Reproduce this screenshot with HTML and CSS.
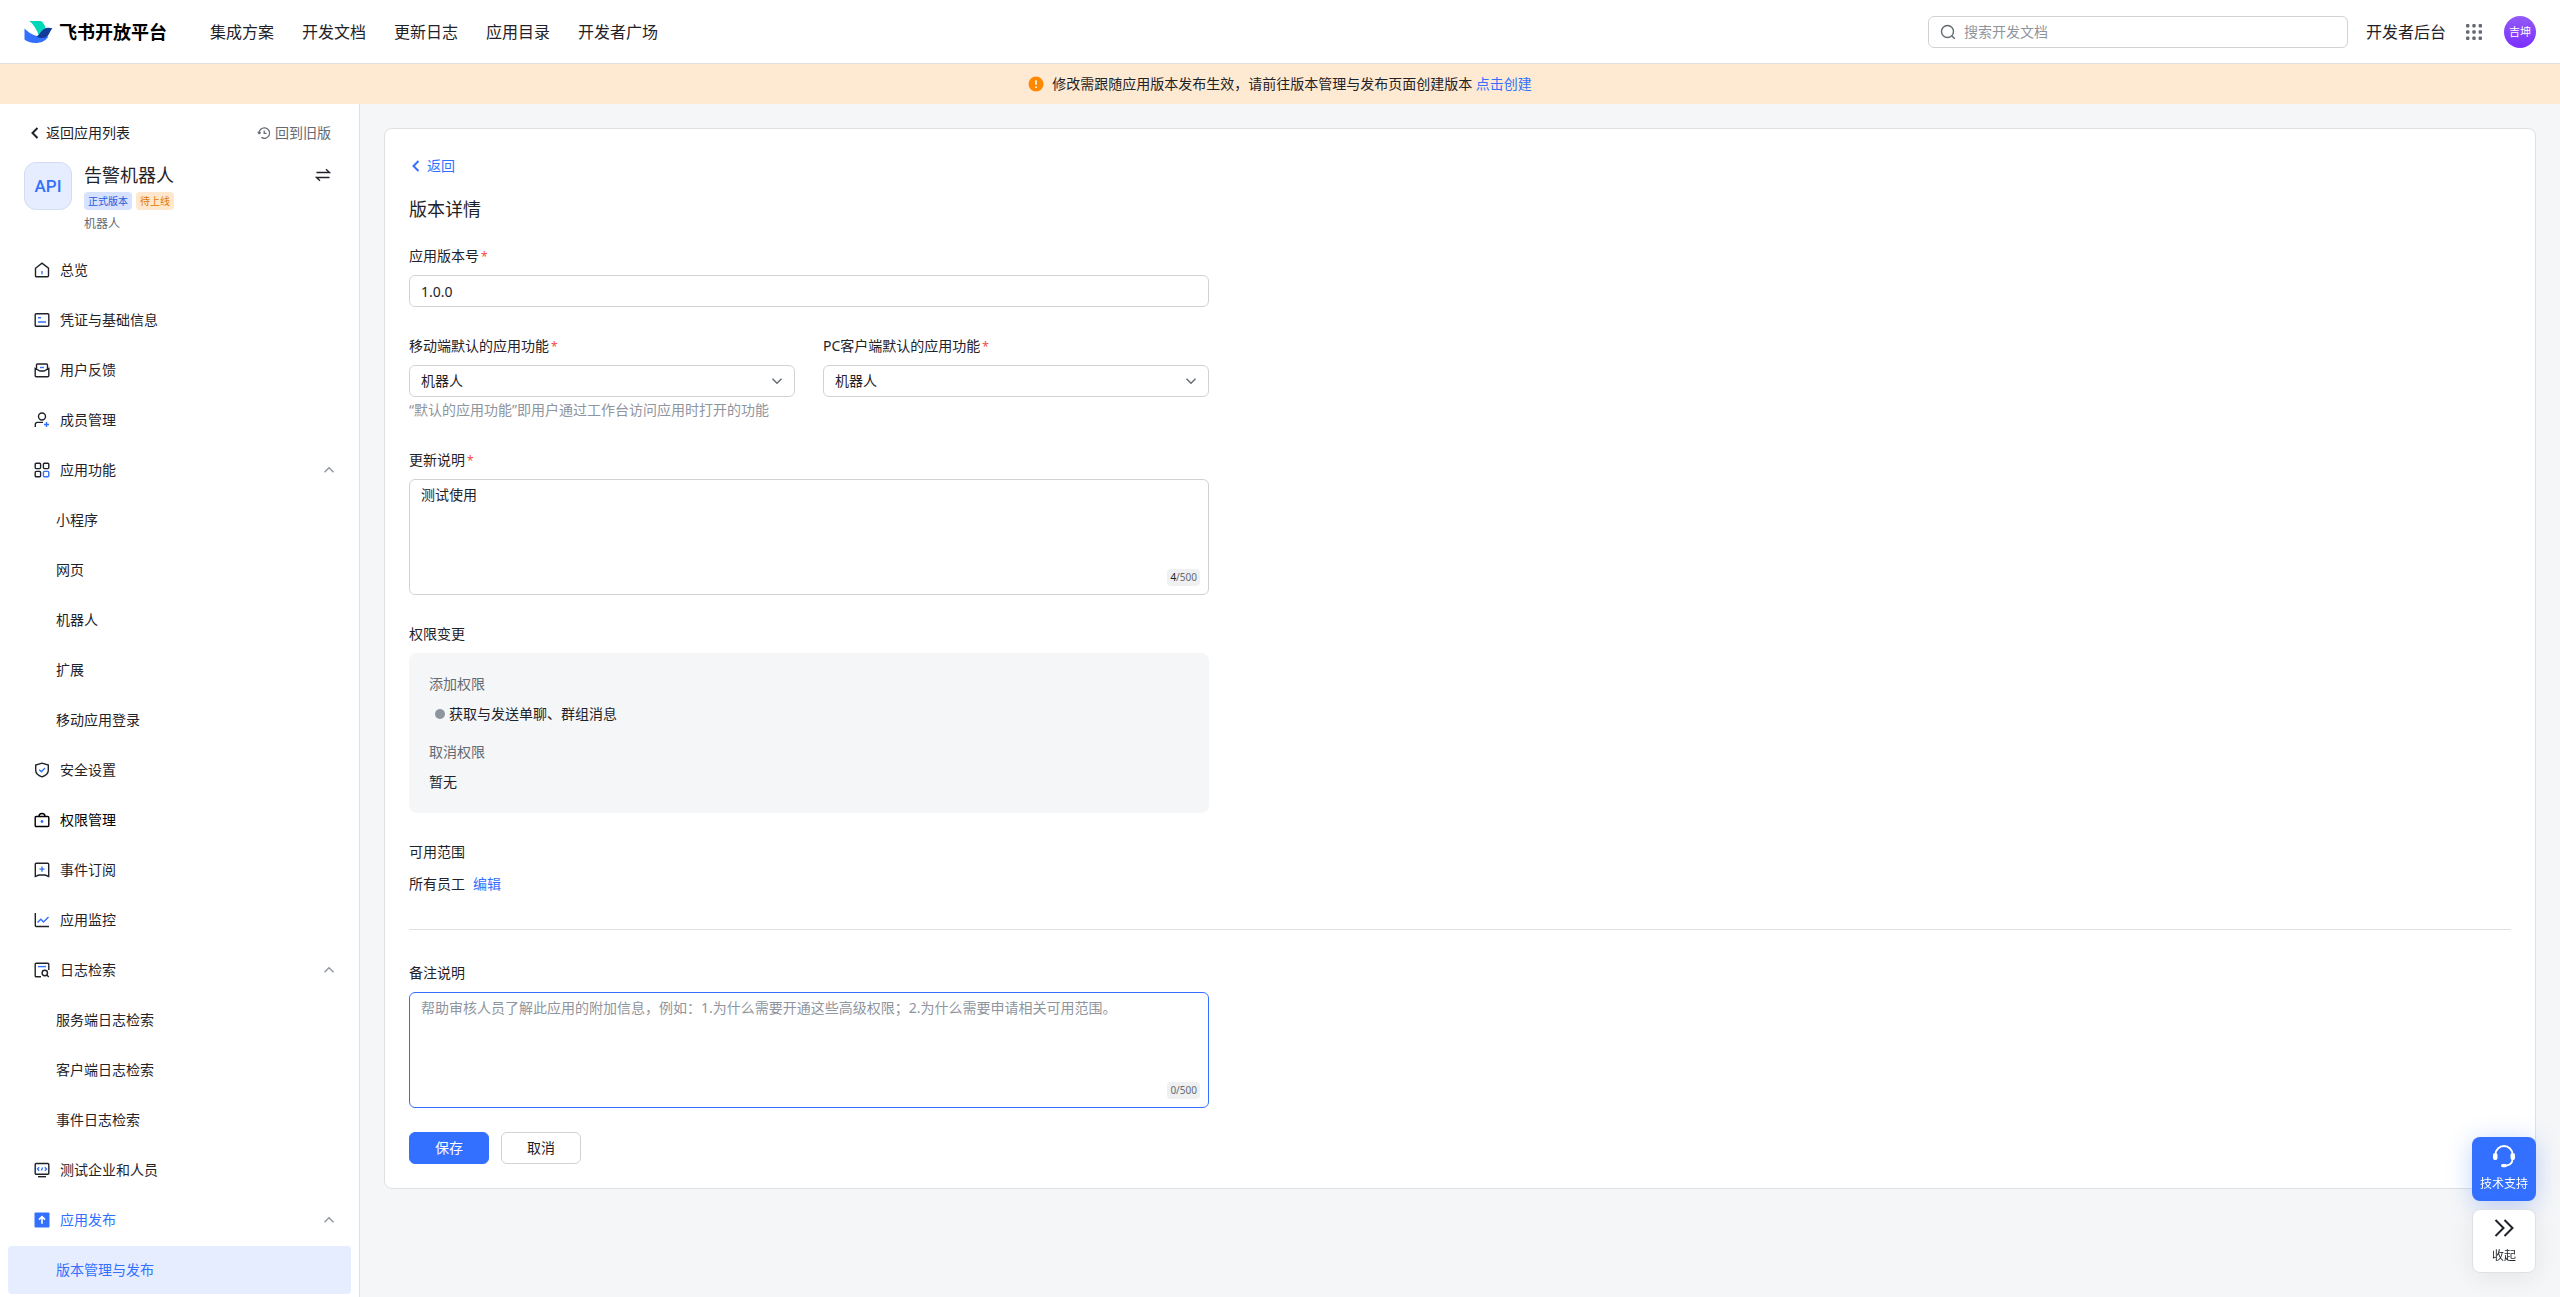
FILE: index.html
```html
<!DOCTYPE html>
<html lang="zh-CN">
<head>
<meta charset="utf-8">
<meta name="viewport" content="width=device-width, initial-scale=1">
<title>版本详情 - 飞书开放平台</title>
<link rel="stylesheet" href="styles.css">
</head>
<body>
<header class="topbar">
  <a class="brand" href="#">
    <svg class="brand-mark" viewBox="0 0 28 22" aria-hidden="true">
      <path fill="#00d6b9" d="M5 0h11c2 0 5 5 5.500 8.500L14.500 14.500C12 8 9 3.500 5 0z"/>
      <path fill="#3370ff" d="M0 7.500C4 11.500 9 15 15 15.500h9C21 20 16.500 22 11 22 6 22 2.500 20.500.5 19 .1 18.500 0 18.500 0 18z"/>
      <path fill="#133c9a" d="M12 15.800C15 13.500 17 9.500 19.500 8 22 6.500 26 6.600 28 7.600 26 9 25 13 23 15.300 20.500 17.500 15.500 17.500 12 15.800z"/>
    </svg>
    <span>飞书开放平台</span>
  </a>
  <nav class="topnav" aria-label="主导航">
    <a href="#">集成方案</a>
    <a href="#">开发文档</a>
    <a href="#">更新日志</a>
    <a href="#">应用目录</a>
    <a href="#">开发者广场</a>
  </nav>
  <div class="topbar-tools">
    <label class="search">
      <svg class="icon" viewBox="0 0 16 16" aria-hidden="true"><circle cx="7.500" cy="7.500" r="6"/><path d="M12 12l2.800 2.800"/></svg>
      <input type="search" placeholder="搜索开发文档" aria-label="搜索开发文档">
    </label>
    <a class="console-link" href="#">开发者后台</a>
    <button class="grid-button" type="button" aria-label="更多产品">
      <svg viewBox="0 0 18 18" aria-hidden="true">
        <rect x="1" y="1" width="3.400" height="3.400" rx="1"/><rect x="7.300" y="1" width="3.400" height="3.400" rx="1"/><rect x="13.600" y="1" width="3.400" height="3.400" rx="1"/>
        <rect x="1" y="7.300" width="3.400" height="3.400" rx="1"/><rect x="7.300" y="7.300" width="3.400" height="3.400" rx="1"/><rect x="13.600" y="7.300" width="3.400" height="3.400" rx="1"/>
        <rect x="1" y="13.600" width="3.400" height="3.400" rx="1"/><rect x="7.300" y="13.600" width="3.400" height="3.400" rx="1"/><rect x="13.600" y="13.600" width="3.400" height="3.400" rx="1"/>
      </svg>
    </button>
    <button class="avatar" type="button">吉坤</button>
  </div>
</header>

<div class="notice" role="status">
  <svg class="notice-icon" viewBox="0 0 16 16" aria-hidden="true"><circle cx="8" cy="8" r="7.500" fill="#ff8800"/><path d="M8 4.300v4.400M8 10.400v1.600" stroke="#fff" stroke-width="1.600"/></svg>
  <span>修改需跟随应用版本发布生效，请前往版本管理与发布页面创建版本 <a href="#">点击创建</a></span>
</div>

<div class="workspace">
  <aside class="sidebar">
    <div class="sidebar-links">
      <a class="back-link" href="#">
        <svg class="icon" viewBox="0 0 12 16" aria-hidden="true"><path d="M8.500 3L3.500 8l5 5"/></svg>返回应用列表
      </a>
      <a class="legacy-link" href="#">
        <svg class="icon" viewBox="0 0 16 16" aria-hidden="true"><path d="M2.400 8.500A6 6 0 1 1 5 13M1 6.800l1.400 2 2-1.400M8.200 5v3.500h2.600"/></svg>回到旧版
      </a>
    </div>

    <div class="app-card">
      <div class="app-logo">API</div>
      <div class="app-info">
        <div class="app-name">告警机器人</div>
        <div class="tags"><span class="tag tag-blue">正式版本</span><span class="tag tag-orange">待上线</span></div>
        <div class="app-type">机器人</div>
      </div>
      <button class="switch-button" type="button" aria-label="切换应用">
        <svg class="icon" viewBox="0 0 16 16" aria-hidden="true"><path d="M1.500 5.500h13L11 2.200M14.500 10.500h-13L5 13.800"/></svg>
      </button>
    </div>

    <nav class="menu" aria-label="应用导航">
      <a class="menu-item" href="#"><svg class="icon" viewBox="0 0 16 16" aria-hidden="true"><path d="M1.500 6.200L8 1.200l6.500 5v7.600a1 1 0 0 1-1 1h-11a1 1 0 0 1-1-1z"/><path class="accent" d="M8 9v3.200"/></svg>总览</a>
      <a class="menu-item" href="#"><svg class="icon" viewBox="0 0 16 16" aria-hidden="true"><rect x="1.200" y="1.700" width="13.600" height="12.600" rx="1"/><path class="accent" d="M4 5.700h3M4 10h8"/></svg>凭证与基础信息</a>
      <a class="menu-item" href="#"><svg class="icon" viewBox="0 0 16 16" aria-hidden="true"><path d="M1.200 6.500v7.200a1 1 0 0 0 1 1h11.600a1 1 0 0 0 1-1V6.500L10 9H6zM2.500 6.500V3a1 1 0 0 1 1-1h9a1 1 0 0 1 1 1v3.500"/><path class="accent" d="M6 5.500h4"/></svg>用户反馈</a>
      <a class="menu-item" href="#"><svg class="icon" viewBox="0 0 16 16" aria-hidden="true"><circle cx="8" cy="4.500" r="3.500"/><path d="M1.300 15v-2.600a2 2 0 0 1 2-2H9"/><path class="accent" d="M12.500 10v5M10 12.500h5"/></svg>成员管理</a>
      <a class="menu-item" href="#" aria-expanded="true"><svg class="icon" viewBox="0 0 16 16" aria-hidden="true"><rect x="1.200" y="1.200" width="5.400" height="5.400" rx="1"/><rect x="9.400" y="1.200" width="5.400" height="5.400" rx="1"/><rect x="1.200" y="9.400" width="5.400" height="5.400" rx="1"/><rect class="accent" x="9.400" y="9.400" width="5.400" height="5.400" rx="1"/></svg>应用功能<svg class="icon fold" viewBox="0 0 12 12" aria-hidden="true"><path d="M1.500 8.200L6 3.800l4.500 4.400"/></svg></a>
      <a class="menu-item sub" href="#">小程序</a>
      <a class="menu-item sub" href="#">网页</a>
      <a class="menu-item sub" href="#">机器人</a>
      <a class="menu-item sub" href="#">扩展</a>
      <a class="menu-item sub" href="#">移动应用登录</a>
      <a class="menu-item" href="#"><svg class="icon" viewBox="0 0 16 16" aria-hidden="true"><path d="M8 1.200l6.300 1.900v5.200c0 3-2.600 5.300-6.300 6.600-3.700-1.300-6.300-3.600-6.300-6.600V3.100z"/><path class="accent" d="M5.200 7.800l2.200 2L11 6"/></svg>安全设置</a>
      <a class="menu-item strong" href="#"><svg class="icon" viewBox="0 0 16 16" aria-hidden="true"><rect x="1.200" y="4.500" width="13.600" height="10" rx="1"/><path d="M5 4.500C5 2.500 6 1.500 8 1.500s3 1 3 3"/><circle class="accent-fill" cx="8" cy="9.500" r="1.400"/></svg>权限管理</a>
      <a class="menu-item" href="#"><svg class="icon" viewBox="0 0 16 16" aria-hidden="true"><path d="M1.300 14.500V2.300a1 1 0 0 1 1-1h11.400a1 1 0 0 1 1 1v12.200L11 13H5z"/><path class="accent" d="M8 4.500v5.200M5.400 7.100h5.200"/></svg>事件订阅</a>
      <a class="menu-item" href="#"><svg class="icon" viewBox="0 0 16 16" aria-hidden="true"><path d="M1.300 1v12.500a1 1 0 0 0 1 1H15"/><path class="accent" d="M3.500 10.500l3.300-3.300 2.700 2.900 5-5"/></svg>应用监控</a>
      <a class="menu-item" href="#" aria-expanded="true"><svg class="icon" viewBox="0 0 16 16" aria-hidden="true"><path d="M7 14.700H2.200a1 1 0 0 1-1-1V2.300a1 1 0 0 1 1-1h11.600a1 1 0 0 1 1 1V8"/><circle cx="10.800" cy="11" r="2.700"/><path d="M12.800 13l2 2"/><path class="accent" d="M4 4.600h8"/></svg>日志检索<svg class="icon fold" viewBox="0 0 12 12" aria-hidden="true"><path d="M1.500 8.200L6 3.800l4.500 4.400"/></svg></a>
      <a class="menu-item sub" href="#">服务端日志检索</a>
      <a class="menu-item sub" href="#">客户端日志检索</a>
      <a class="menu-item sub" href="#">事件日志检索</a>
      <a class="menu-item" href="#"><svg class="icon" viewBox="0 0 16 16" aria-hidden="true"><rect x="1.200" y="1.500" width="13.600" height="10.800" rx="1"/><path d="M4 14.700h8"/><path class="accent" d="M5.200 5.300L3.500 7l1.700 1.700M10.800 5.300L12.500 7l-1.700 1.700M8.600 5.500l-1.200 3"/></svg>测试企业和人员</a>
      <a class="menu-item current-group" href="#" aria-expanded="true"><svg class="icon" viewBox="0 0 16 16" aria-hidden="true"><rect x="0.500" y="0.500" width="15" height="15" rx="1" fill="#3370ff" stroke="none"/><path d="M8 11.800V5M5 7.600l3-3 3 3" stroke="#fff" stroke-width="1.600"/></svg>应用发布<svg class="icon fold" viewBox="0 0 12 12" aria-hidden="true"><path d="M1.500 8.200L6 3.800l4.500 4.400"/></svg></a>
      <a class="menu-item sub active" href="#" aria-current="page">版本管理与发布</a>
    </nav>
  </aside>

  <main class="content">
    <form class="panel">
      <a class="panel-back" href="#"><svg class="icon" viewBox="0 0 12 16" aria-hidden="true"><path d="M8.500 3L3.500 8l5 5"/></svg>返回</a>
      <h1>版本详情</h1>

      <div class="field">
        <label for="version">应用版本号<span class="required">*</span></label>
        <input class="control" id="version" type="text" value="1.0.0">
      </div>

      <div class="field-row">
        <div class="field">
          <label for="mobile">移动端默认的应用功能<span class="required">*</span></label>
          <div class="select-wrap">
            <select class="control" id="mobile"><option>机器人</option></select>
            <svg class="icon caret" viewBox="0 0 12 12" aria-hidden="true"><path d="M1.500 3.800L6 8.200l4.500-4.400"/></svg>
          </div>
          <p class="hint">“默认的应用功能”即用户通过工作台访问应用时打开的功能</p>
        </div>
        <div class="field">
          <label for="desktop">PC客户端默认的应用功能<span class="required">*</span></label>
          <div class="select-wrap">
            <select class="control" id="desktop"><option>机器人</option></select>
            <svg class="icon caret" viewBox="0 0 12 12" aria-hidden="true"><path d="M1.500 3.800L6 8.200l4.500-4.400"/></svg>
          </div>
        </div>
      </div>

      <div class="field">
        <label for="changes">更新说明<span class="required">*</span></label>
        <div class="textarea-wrap">
          <textarea class="control" id="changes">测试使用</textarea>
          <span class="counter"><b>4</b>/500</span>
        </div>
      </div>

      <section class="field">
        <h2>权限变更</h2>
        <div class="permissions">
          <h3>添加权限</h3>
          <ul><li>获取与发送单聊、群组消息</li></ul>
          <h3>取消权限</h3>
          <p>暂无</p>
        </div>
      </section>

      <section class="field">
        <h2>可用范围</h2>
        <p class="scope">所有员工<a href="#">编辑</a></p>
      </section>

      <hr>

      <div class="field remark">
        <label for="remark">备注说明</label>
        <div class="textarea-wrap">
          <textarea class="control focused" id="remark" placeholder="帮助审核人员了解此应用的附加信息，例如：1.为什么需要开通这些高级权限；2.为什么需要申请相关可用范围。"></textarea>
          <span class="counter">0/500</span>
        </div>
      </div>

      <div class="actions">
        <button class="button primary" type="submit">保存</button>
        <button class="button" type="button">取消</button>
      </div>
    </form>
  </main>
</div>

<div class="floating">
  <button class="float-button support" type="button">
    <svg viewBox="0 0 24 24" aria-hidden="true"><path d="M3.500 14V10.500a8.500 8.500 0 0 1 17 0V15c0 3.500-2.500 6-6 6.500" fill="none" stroke="currentColor" stroke-width="1.800"/><rect x="1" y="9" width="4.500" height="7" rx="2" fill="currentColor"/><rect x="18.500" y="9" width="4.500" height="7" rx="2" fill="currentColor"/><rect x="9" y="20" width="6" height="3.200" rx="1.600" fill="currentColor"/></svg>
    技术支持
  </button>
  <button class="float-button collapse" type="button">
    <svg viewBox="0 0 24 24" aria-hidden="true"><path d="M3.500 4l8 8-8 8M12.500 4l8 8-8 8" fill="none" stroke="currentColor" stroke-width="2"/></svg>
    收起
  </button>
</div>
</body>
</html>
```

FILE: styles.css
```css
:root {
  --blue: #3370ff;
  --text: #1f2329;
  --muted: #646a73;
  --faint: #8f959e;
  --line: #dee0e3;
  --control-line: #d0d3d6;
  --surface: #f5f6f7;
}

* {
  box-sizing: border-box;
}

body {
  margin: 0;
  min-height: 100vh;
  display: flex;
  flex-direction: column;
  background: var(--surface);
  color: var(--text);
  font: 14px/22px "Noto Sans", "Noto Sans CJK SC", sans-serif;
}

a {
  color: inherit;
  text-decoration: none;
}

button,
input,
select,
textarea {
  font: inherit;
  color: inherit;
}

button {
  padding: 0;
  border: 0;
  background: none;
  cursor: pointer;
}

h1,
h2,
h3,
p,
ul {
  margin: 0;
  padding: 0;
  font-size: 14px;
  font-weight: 400;
}

.icon {
  width: 16px;
  height: 16px;
  flex: none;
  fill: none;
  stroke: currentColor;
  stroke-width: 1.4;
}

.icon .accent {
  stroke: var(--blue);
}

.icon .accent-fill {
  fill: var(--blue);
  stroke: none;
}

/* Top bar */
.topbar {
  display: flex;
  align-items: center;
  height: 64px;
  padding: 0 24px;
  background: #fff;
  border-bottom: 1px solid var(--line);
}

.brand {
  display: flex;
  align-items: center;
  gap: 6px;
  color: #000;
  font-size: 18px;
  font-weight: 700;
}

.brand-mark {
  width: 29px;
  height: 22px;
}

.topnav {
  display: flex;
  gap: 28px;
  margin-left: 43px;
  font-size: 16px;
}

.topbar-tools {
  display: flex;
  align-items: center;
  margin-left: auto;
}

.search {
  display: flex;
  align-items: center;
  gap: 8px;
  width: 420px;
  height: 32px;
  padding: 0 11px;
  border: 1px solid var(--control-line);
  border-radius: 6px;
  color: var(--muted);
}

.search input {
  flex: 1;
  min-width: 0;
  padding: 0;
  border: 0;
  outline: 0;
  background: none;
  appearance: none;
}

::placeholder {
  color: var(--faint);
  opacity: 1;
}

.console-link {
  margin-left: 18px;
  font-size: 16px;
}

.grid-button {
  display: flex;
  margin-left: 19px;
  color: var(--muted);
}

.grid-button svg {
  width: 18px;
  height: 18px;
  fill: currentColor;
}

.avatar {
  width: 32px;
  height: 32px;
  margin-left: 21px;
  border-radius: 50%;
  background: linear-gradient(#935af6, #7b2fff);
  color: #fff;
  font-size: 11px;
}

/* Notice */
.notice {
  display: flex;
  align-items: center;
  justify-content: center;
  gap: 8px;
  min-height: 40px;
  background: #feead2;
}

.notice a {
  color: var(--blue);
}

.notice-icon {
  width: 16px;
  height: 16px;
}

/* Sidebar */
.workspace {
  display: flex;
  flex: 1;
}

.sidebar {
  flex: none;
  width: 360px;
  padding-top: 18px;
  background: #fff;
  border-right: 1px solid var(--line);
}

.sidebar-links {
  display: flex;
  justify-content: space-between;
  padding: 0 28px;
}

.back-link,
.legacy-link,
.panel-back {
  display: flex;
  align-items: center;
  gap: 4px;
}

.back-link .icon,
.panel-back .icon {
  width: 14px;
  stroke-width: 2;
}

.legacy-link {
  color: var(--muted);
}

.legacy-link .icon {
  width: 14px;
}

.app-card {
  display: flex;
  gap: 12px;
  margin: 18px 28px 12px 24px;
}

.app-logo {
  display: grid;
  place-items: center;
  flex: none;
  width: 48px;
  height: 48px;
  border: 1px solid #d3dcf0;
  border-radius: 12px;
  background: #e6edff;
  color: var(--blue);
  font: 500 17px "Roboto", sans-serif;
}

.app-info {
  display: grid;
  gap: 4px;
  flex: 1;
}

.app-name {
  font-size: 18px;
  line-height: 26px;
}

.tags {
  display: flex;
  gap: 4px;
}

.tag {
  padding: 0 4px;
  border-radius: 4px;
  font-size: 10px;
  line-height: 18px;
}

.tag-blue {
  background: #d6e2ff;
  color: #245bdb;
}

.tag-orange {
  background: #fee7cd;
  color: #de7802;
}

.app-type {
  color: var(--muted);
  font-size: 12px;
  line-height: 20px;
}

.switch-button {
  display: flex;
  align-self: flex-start;
  padding: 5px 0;
}

.menu {
  display: grid;
  gap: 2px;
  padding: 0 8px;
}

.menu-item {
  display: flex;
  align-items: center;
  gap: 10px;
  height: 48px;
  padding: 0 16px 0 26px;
  border-radius: 4px;
}

.menu-item.sub {
  padding-left: 48px;
}

.menu-item.strong {
  color: #000;
}

.menu-item.current-group {
  color: var(--blue);
}

.menu-item.active {
  background: #e6edff;
  color: var(--blue);
}

.fold {
  width: 12px;
  height: 12px;
  margin-left: auto;
  color: var(--faint);
}

/* Content */
.content {
  flex: 1;
  min-width: 0;
  padding: 24px;
}

.panel {
  padding: 24px;
  background: #fff;
  border: 1px solid var(--line);
  border-radius: 8px;
}

.panel-back {
  width: fit-content;
  min-height: 26px;
  color: var(--blue);
}

h1 {
  margin: 16px 0 22px;
  font-size: 18px;
  line-height: 28px;
}

.field {
  max-width: 800px;
  margin-bottom: 28px;
}

.field > label,
h2 {
  display: block;
  margin-bottom: 8px;
}

.required {
  margin-left: 2px;
  color: #f54a45;
  font-size: 12px;
  line-height: 12px;
}

.field-row {
  display: flex;
  gap: 28px;
  max-width: 800px;
}

.field-row .field {
  flex: 1;
}

.control {
  display: block;
  width: 100%;
  height: 32px;
  padding: 0 11px;
  border: 1px solid var(--control-line);
  border-radius: 6px;
  outline: 0;
  background: #fff;
  appearance: none;
}

.control.focused {
  border-color: var(--blue);
}

.select-wrap,
.textarea-wrap {
  position: relative;
}

.caret {
  position: absolute;
  top: 10px;
  right: 12px;
  width: 12px;
  height: 12px;
  color: var(--muted);
  pointer-events: none;
}

.hint {
  margin-top: 2px;
  color: var(--faint);
}

textarea.control {
  height: 116px;
  padding: 4px 11px;
  resize: none;
}

.counter {
  position: absolute;
  right: 9px;
  bottom: 9px;
  padding: 0 3px;
  border-radius: 4px;
  background: #eff0f1;
  color: var(--muted);
  font-size: 10px;
  line-height: 17px;
}

.counter b {
  color: var(--text);
  font-weight: 400;
}

.permissions {
  display: grid;
  gap: 8px;
  padding: 20px;
  border-radius: 8px;
  background: var(--surface);
}

.permissions h3 {
  color: var(--muted);
}

.permissions li {
  display: flex;
  align-items: center;
  gap: 4px;
  margin-bottom: 8px;
  padding-left: 6px;
}

.permissions li::before {
  content: "";
  width: 10px;
  height: 10px;
  border-radius: 50%;
  background: var(--faint);
}

.scope {
  display: flex;
  gap: 8px;
  margin-top: 10px;
}

.scope a {
  color: var(--blue);
}

hr {
  height: 1px;
  margin: 34px 0 32px;
  border: 0;
  background: var(--line);
}

.remark {
  margin-bottom: 24px;
}

.actions {
  display: flex;
  gap: 12px;
}

.button {
  width: 80px;
  height: 32px;
  border: 1px solid var(--control-line);
  border-radius: 6px;
  background: #fff;
}

.button.primary {
  border-color: var(--blue);
  background: var(--blue);
  color: #fff;
}

/* Floating help buttons */
.floating {
  position: fixed;
  right: 24px;
  bottom: 24px;
  display: grid;
  gap: 8px;
}

.float-button {
  display: grid;
  justify-items: center;
  align-content: center;
  gap: 6px;
  width: 64px;
  height: 64px;
  border-radius: 8px;
  font-size: 12px;
  line-height: 20px;
}

.float-button svg {
  width: 24px;
  height: 24px;
}

.support {
  background: var(--blue);
  color: #fff;
  box-shadow: 0 4px 24px rgba(51, 112, 255, 0.3);
}

.collapse {
  background: #fff;
  border: 1px solid var(--line);
  box-shadow: 0 4px 24px rgba(31, 35, 41, 0.08);
}
```
